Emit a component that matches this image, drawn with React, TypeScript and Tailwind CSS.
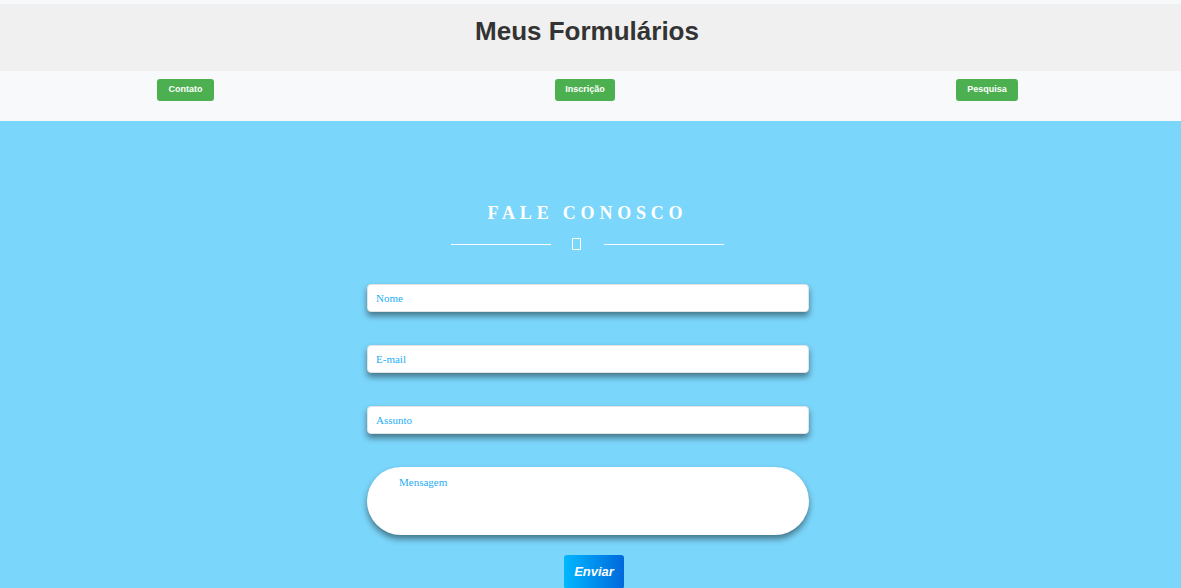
export default function App() {
  const fields = ["Nome", "E-mail", "Assunto"];

  return (
    <div className="min-h-[588px] bg-[#7bd6fb] font-['Liberation_Sans',Arial,sans-serif]">
      {/* Header */}
      <div className="bg-[#f7f8fa] pt-[4px]">
        <header className="h-[67px] bg-[#f0f0f0] flex items-center justify-center pr-[7px]">
          <h1 className="text-[26px] font-bold text-[#333] leading-none -mt-[14px]">
            Meus Formulários
          </h1>
        </header>
      </div>

      {/* Nav */}
      <nav className="h-[50px] bg-[#f7f9fb] flex items-start justify-between pl-[157px] pr-[163px] pt-[8px]">
        <button className="h-[22px] w-[57px] bg-[#4caf50] text-white text-[9px] font-bold rounded-[3px]">
          Contato
        </button>
        <button className="h-[22px] w-[60px] bg-[#4caf50] text-white text-[9px] font-bold rounded-[3px]">
          Inscrição
        </button>
        <button className="h-[22px] w-[62px] bg-[#4caf50] text-white text-[9px] font-bold rounded-[3px]">
          Pesquisa
        </button>
      </nav>

      {/* Contact form */}
      <section className="flex flex-col items-center pt-[83px] pr-[5px]">
        <h2 className="font-['Liberation_Serif','Times_New_Roman',serif] text-[18px] font-bold text-white tracking-[4.8px] leading-none pr-[1px]">
          FALE CONOSCO
        </h2>
        <div className="flex items-center mt-[16px] mr-[2px]">
          <div className="w-[100px] h-px bg-white" />
          <span className="ml-[21px] mr-[23px] w-[9px] h-[12px] border border-white" />
          <div className="w-[120px] h-px bg-white" />
        </div>

        <form className="w-[442px] mt-[34px] flex flex-col">
          {fields.map((f) => (
            <input
              key={f}
              placeholder={f}
              className="h-[28px] mb-[33px] bg-white rounded-[4px] border border-[#e3e3e3] px-[8px] font-['Liberation_Serif','Times_New_Roman',serif] text-[11px] text-[#1eaef5] placeholder:text-[#1eaef5] shadow-[0_4px_6px_rgba(0,0,0,0.45)] outline-none"
            />
          ))}
          <textarea
            placeholder="Mensagem"
            className="h-[68px] resize-none bg-white rounded-[34px] px-[32px] pt-[7px] font-['Liberation_Serif','Times_New_Roman',serif] text-[11px] text-[#1eaef5] placeholder:text-[#1eaef5] shadow-[0_4px_6px_rgba(0,0,0,0.45)] outline-none"
          />
          <div className="flex justify-center mt-[20px] pl-[12px]">
            <button
              type="button"
              className="w-[60px] h-[34px] rounded-[3px] bg-gradient-to-r from-[#00b7ff] to-[#0068dc] text-white text-[13px] font-bold italic"
            >
              Enviar
            </button>
          </div>
        </form>
      </section>
    </div>
  );
}
